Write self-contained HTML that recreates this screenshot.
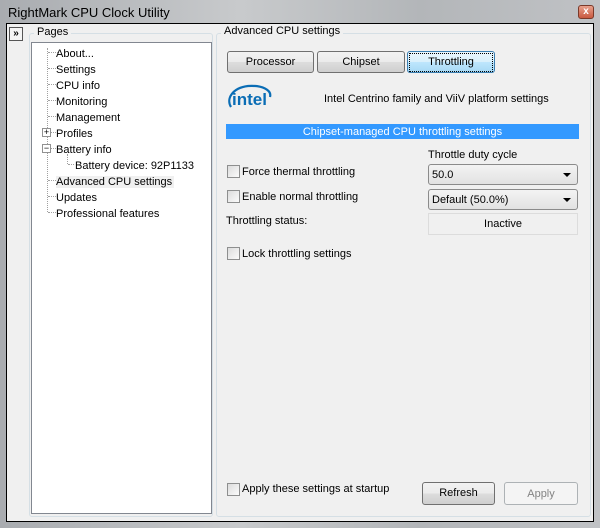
<!DOCTYPE html>
<html><head><style>
*{margin:0;padding:0;box-sizing:border-box}
body{width:600px;height:528px;overflow:hidden;background:#b9bcc0;font-family:"Liberation Sans",sans-serif;font-size:11px;color:#000;position:relative}
.a{position:absolute}
.frame{left:0;top:0;width:600px;height:528px;background:linear-gradient(90deg,#a9acb0,#c8cacc 40%,#b3b6b9 70%,#c0c2c5);}
.client{left:6px;top:23px;width:588px;height:499px;background:#f0f0f0;border:1px solid #000;}
.grp{border:1px solid #d5dfe5;border-radius:3px}
.btn{border:1px solid #707070;border-radius:3px;background:linear-gradient(#f2f2f2,#ebebeb 50%,#dddddd 51%,#cfcfcf);text-align:center;line-height:21px}
.cb{width:13px;height:13px;border:1px solid #8e8f8f;background:linear-gradient(135deg,#dcdcdc,#fbfbfb)}
.combo{border:1px solid #8b8b8b;border-radius:3px;background:linear-gradient(#f3f3f3,#e2e2e2);padding-left:3px;line-height:20px}
.combo:after{content:"";position:absolute;right:6px;top:8px;border:4px solid transparent;border-top:4px solid #000;border-bottom:0}
.t{white-space:nowrap;padding-top:1px}
.dot{border-top:1px dotted #a0a0a0;width:10px;height:0}
.vdot{border-left:1px dotted #a0a0a0;width:0}
</style></head><body>
<div class="a frame"></div>
<div class="a t" style="left:8px;top:4px;font-size:13px;">RightMark CPU Clock Utility</div>
<div class="a" style="left:578px;top:5px;width:16px;height:14px;border:1px solid #7a3a2a;border-radius:3px;background:linear-gradient(#e8a08c,#c85a40);color:#fff;font-size:10px;font-weight:bold;text-align:center;line-height:12px">x</div>
<div class="a client"></div>
<div class="a" style="left:9px;top:27px;width:14px;height:14px;border:1px solid #555;background:#f4f4f4;font-size:10px;font-weight:bold;line-height:11px;text-align:center">»</div>
<div class="a grp" style="left:29px;top:33px;width:184px;height:484px"></div>
<div class="a t" style="left:34px;top:26px;background:#f0f0f0;padding:0 3px">Pages</div>
<div class="a" style="left:31px;top:42px;width:181px;height:472px;background:#fff;border:1px solid #828790"></div>
<div class="a vdot" style="left:47px;top:48px;height:164px"></div>
<div class="a vdot" style="left:67px;top:154px;height:10px"></div>
<div class="a dot" style="left:48px;top:52px"></div>
<div class="a dot" style="left:48px;top:68px"></div>
<div class="a dot" style="left:48px;top:84px"></div>
<div class="a dot" style="left:48px;top:100px"></div>
<div class="a dot" style="left:48px;top:116px"></div>
<div class="a dot" style="left:48px;top:132px"></div>
<div class="a dot" style="left:48px;top:148px"></div>
<div class="a dot" style="left:68px;top:164px;width:6px"></div>
<div class="a dot" style="left:48px;top:180px"></div>
<div class="a dot" style="left:48px;top:196px"></div>
<div class="a dot" style="left:48px;top:212px"></div>
<div class="a" style="left:42px;top:128px;width:9px;height:9px;border:1px solid #919191;background:#fff;font-size:9px;line-height:7px;text-align:center">+</div>
<div class="a" style="left:42px;top:144px;width:9px;height:9px;border:1px solid #919191;background:#fff;font-size:9px;line-height:6px;text-align:center">−</div>
<div class="a t" style="left:56px;top:45px;line-height:16px">About...<br>Settings<br>CPU info<br>Monitoring<br>Management<br>Profiles<br>Battery info<br><span style="margin-left:19px">Battery device: 92P1133</span><br><span style="background:#f0f0f0;padding-right:2px">Advanced CPU settings</span><br>Updates<br>Professional features</div>
<div class="a grp" style="left:216px;top:33px;width:375px;height:484px"></div>
<div class="a t" style="left:221px;top:25px;background:#f0f0f0;padding:0 3px">Advanced CPU settings</div>
<div class="a btn" style="left:227px;top:51px;width:87px;height:22px">Processor</div>
<div class="a btn" style="left:317px;top:51px;width:88px;height:22px">Chipset</div>
<div class="a btn" style="left:407px;top:51px;width:88px;height:22px;border-color:#3c7fb1;background:linear-gradient(#eaf6fd,#d9f0fc 50%,#bee6fd 51%,#a7d9f5)"><span style="outline:1px dotted #000;outline-offset:0;display:block;margin:2px;line-height:17px">Throttling</span></div>
<div class="a" style="left:226px;top:83px;width:48px;height:30px">
<svg width="48" height="30" viewBox="0 0 48 30"><path d="M5 24 C0 16 6 5 22 3 C36 2 46 7 44 14" fill="none" stroke="#0a6db5" stroke-width="2.2"/><text x="6" y="22" font-family="Liberation Sans" font-size="17" fill="#0a6db5" font-weight="bold">intel</text></svg></div>
<div class="a t" style="left:324px;top:92px">Intel Centrino family and ViiV platform settings</div>
<div class="a" style="left:226px;top:124px;width:353px;height:15px;background:#3399ff;color:#fff;text-align:center;line-height:16px">Chipset-managed CPU throttling settings</div>
<div class="a t" style="left:428px;top:148px">Throttle duty cycle</div>
<div class="a cb" style="left:227px;top:165px"></div><div class="a t" style="left:242px;top:165px">Force thermal throttling</div>
<div class="a combo" style="left:428px;top:164px;width:150px;height:21px">50.0</div>
<div class="a cb" style="left:227px;top:190px"></div><div class="a t" style="left:242px;top:190px">Enable normal throttling</div>
<div class="a combo" style="left:428px;top:189px;width:150px;height:21px">Default (50.0%)</div>
<div class="a t" style="left:226px;top:214px">Throttling status:</div>
<div class="a" style="left:428px;top:213px;width:150px;height:22px;border:1px solid #dcdcdc;background:#f0f0f0;text-align:center;line-height:21px">Inactive</div>
<div class="a cb" style="left:227px;top:247px"></div><div class="a t" style="left:242px;top:247px">Lock throttling settings</div>
<div class="a cb" style="left:227px;top:483px"></div><div class="a t" style="left:242px;top:482px">Apply these settings at startup</div>
<div class="a btn" style="left:422px;top:482px;width:73px;height:23px">Refresh</div>
<div class="a" style="left:504px;top:482px;width:74px;height:23px;border:1px solid #adb2b5;border-radius:3px;background:#f4f4f4;color:#838383;text-align:center;line-height:22px">Apply</div>
</body></html>
